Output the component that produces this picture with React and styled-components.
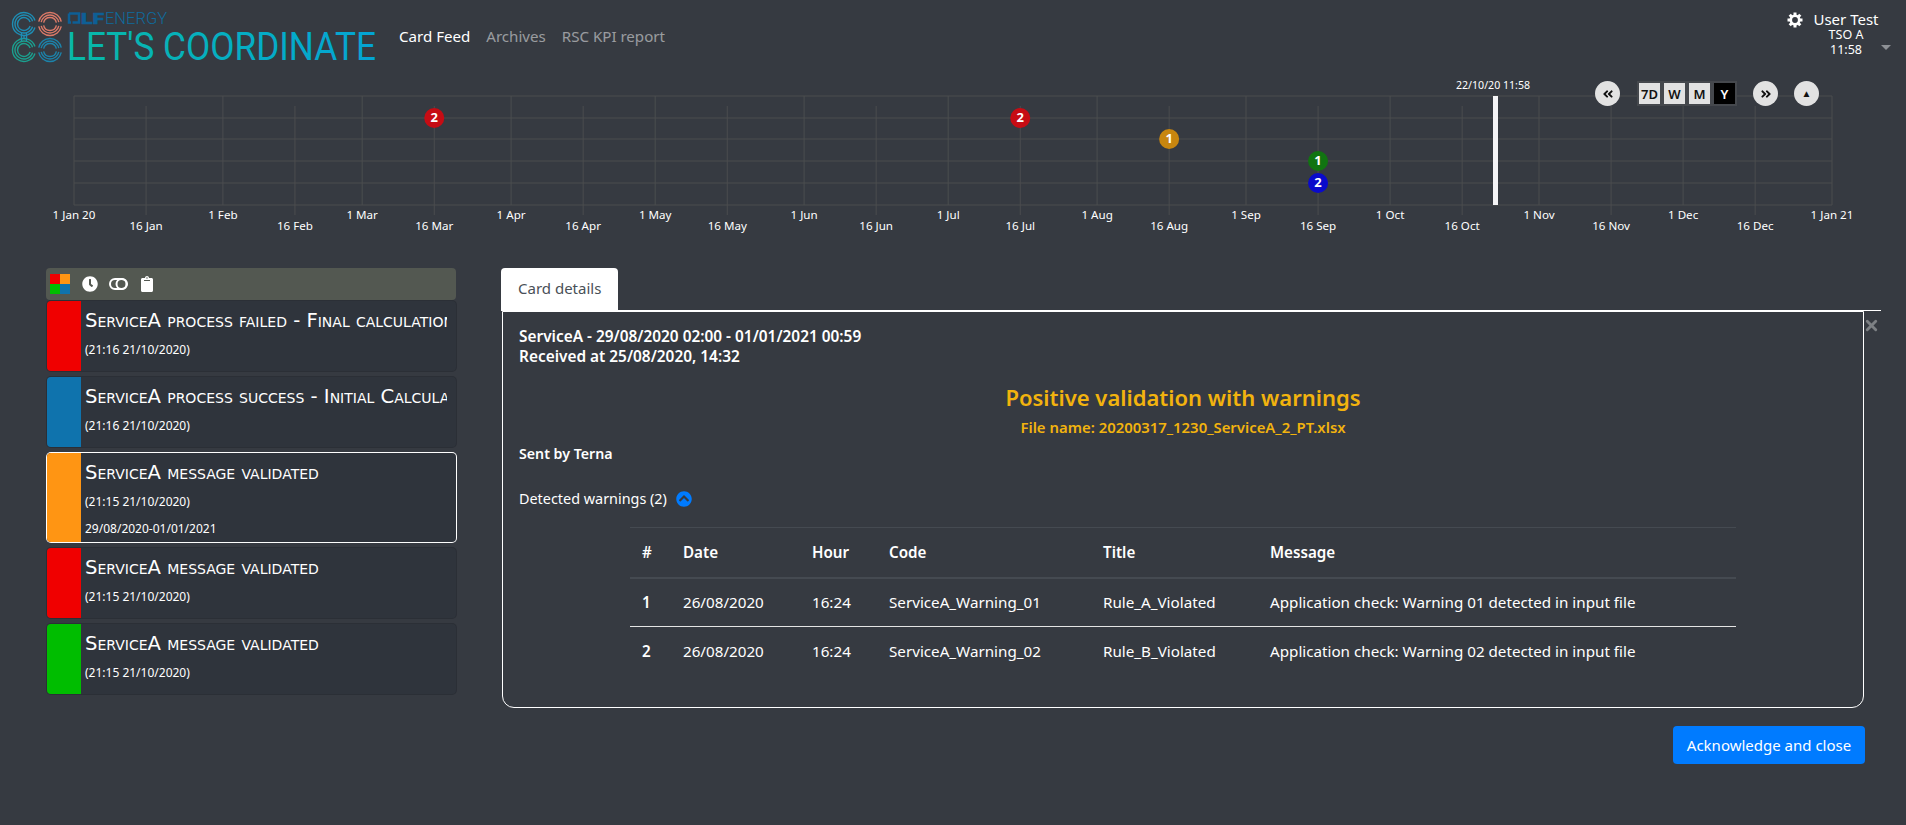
import React from 'react';
import styled, { createGlobalStyle } from 'styled-components';
import { FaClock, FaClipboard, FaChevronCircleUp, FaAngleDoubleLeft, FaAngleDoubleRight } from 'react-icons/fa';
import { X } from 'lucide-react';

const FONT = '"Noto Sans", "Open Sans", sans-serif';

const GlobalStyle = createGlobalStyle`
  html, body {
    margin: 0;
    padding: 0;
    background: #363a41;
    color: #fff;
    font-family: ${FONT};
  }
  * { box-sizing: border-box; }
`;

const Page = styled.div`
  width: 1906px;
  height: 825px;
  overflow: hidden;
`;

/* top bar */
const Header = styled.header`
  display: flex;
  align-items: flex-start;
  height: 76px;
`;

const Brand = styled.svg`
  display: block;
  width: 390px;
  height: 76px;
  flex: none;
`;

const Nav = styled.nav`
  display: flex;
  gap: 16px;
  margin-left: 9px;
  padding-top: 25px;
`;

const NavLink = styled.a`
  font-size: 15.1px;
  line-height: 22px;
  color: ${(p) => (p.$active ? '#fff' : 'rgba(255,255,255,0.5)')};
`;

const UserBox = styled.div`
  display: flex;
  margin-left: auto;
  padding: 10px 15px 0 0;
  gap: 10px;
`;

const GearIcon = styled.svg`
  display: block;
  width: 16px;
  height: 16px;
  margin-top: 2px;
`;

const UserText = styled.div`
  display: flex;
  flex-direction: column;
  align-items: center;
  width: 66px;
`;

const UserName = styled.span`
  font-size: 15px;
  line-height: 18px;
  white-space: nowrap;
`;

const UserSub = styled.span`
  font-size: 12.5px;
  line-height: 14.5px;
`;

const Caret = styled.span`
  width: 0;
  height: 0;
  margin: 35px 0 0 -8px;
  border-left: 5px solid transparent;
  border-right: 5px solid transparent;
  border-top: 5px solid #8d9095;
`;

/* timeline */
const Timeline = styled.section`
  position: relative;
  height: 160px;
`;

const Chart = styled.svg`
  display: block;
  width: 1906px;
  height: 160px;
`;

const Controls = styled.div`
  position: absolute;
  top: 5px;
  left: 1595px;
  display: flex;
  align-items: center;
`;

const RoundBtn = styled.button`
  display: flex;
  align-items: center;
  justify-content: center;
  width: 25px;
  height: 25px;
  padding: 0;
  margin-left: ${(p) => p.$before || 0}px;
  margin-right: ${(p) => p.$after || 0}px;
  border: 0;
  border-radius: 50%;
  background: #e2e2e2;
  color: #111;
  font-family: "Liberation Sans", sans-serif;
  font-size: 10px;
  line-height: 1;
`;

const RangeBtn = styled.button`
  width: 25px;
  height: 25px;
  padding: 0;
  border: 2px solid #45484d;
  background: ${(p) => (p.$active ? '#000' : '#e2e2e2')};
  color: ${(p) => (p.$active ? '#fff' : '#111')};
  font-family: ${FONT};
  font-weight: 600;
  font-size: 13px;
  line-height: 20px;
`;

/* main area */
const Main = styled.main`
  display: flex;
  align-items: flex-start;
  margin-top: 32px;
  padding-left: 46px;
  gap: 45px;
`;

const FeedColumn = styled.div`
  width: 410px;
  flex: none;
`;

const FilterBar = styled.div`
  display: flex;
  align-items: center;
  height: 32px;
  padding-left: 4px;
  border-radius: 4px;
  background: #535851;
  color: #fff;
`;

const FilterIcons = styled.div`
  display: flex;
  align-items: center;
  margin-left: 12px;
  gap: 11px;
  font-size: 16px;
  line-height: 0;
`;

const ColourSquare = styled.div`
  display: grid;
  grid-template-columns: 10px 10px;
  grid-auto-rows: 10px;
  width: 20px;
`;

const Swatch = styled.span`
  background: ${(p) => p.$color};
`;

const CardList = styled.div`
  display: flex;
  flex-direction: column;
  gap: 6px;
  margin-top: 1px;
`;

const Card = styled.article`
  display: flex;
  height: ${(p) => (p.$selected ? 89 : 70)}px;
  margin-left: 1px;
  overflow: hidden;
  border-radius: 4px;
  background: #2f343c;
  box-shadow: ${(p) => (p.$selected ? '0 0 0 1px #fff' : '0 0 0 1px #2b2f36')};
`;

const CardBar = styled.div`
  width: 34px;
  flex: none;
  background: ${(p) => p.$color};
`;

const CardBody = styled.div`
  flex: 1;
  min-width: 0;
  padding: 8px 9px 0 4px;
`;

const CardTitle = styled.div`
  overflow: hidden;
  white-space: nowrap;
  font-family: "DejaVu Sans", sans-serif;
  font-variant: small-caps;
  font-size: 19.6px;
  line-height: 24px;
`;

const CardLine = styled.div`
  margin-top: ${(p) => p.$top || 8}px;
  font-size: 12px;
  line-height: 18px;
`;

const DetailColumn = styled.div`
  position: relative;
  width: 1380px;
  flex: none;
`;

const TabRow = styled.div`
  height: 43px;
  border-bottom: 1px solid #fff;
`;

const Tab = styled.div`
  width: 117px;
  height: 42px;
  padding-left: 17px;
  border-radius: 4px 4px 0 0;
  background: #fff;
  color: #495057;
  font-size: 15px;
  line-height: 41px;
`;

const CloseBtn = styled.span`
  position: absolute;
  top: 49px;
  right: 1px;
  color: #7d8084;
  line-height: 0;
`;

const Panel = styled.div`
  width: 1362px;
  height: 397px;
  margin-left: 1px;
  padding: 15px 16px 0;
  border: 1px solid #fff;
  border-radius: 0 0 12px 12px;
`;

const Heading = styled.div`
  font-size: 15.4px;
  font-weight: 600;
  line-height: 19.5px;
`;

const ResultTitle = styled.div`
  margin-top: 16px;
  text-align: center;
  color: #f2b30e;
  font-size: 22px;
  font-weight: 600;
  line-height: 30px;
`;

const FileName = styled.div`
  margin-top: 6px;
  text-align: center;
  color: #f2b30e;
  font-size: 14.9px;
  font-weight: 600;
  line-height: 18px;
`;

const SentBy = styled.div`
  margin-top: 9px;
  font-size: 14.2px;
  font-weight: 600;
  line-height: 18px;
`;

const WarningsRow = styled.div`
  display: flex;
  align-items: center;
  gap: 9px;
  margin-top: 27px;
  font-size: 14.4px;
  line-height: 18px;
  svg { color: #007bff; font-size: 16px; }
`;

const WarningsTable = styled.table`
  width: 1106px;
  margin: 19px auto 0;
  table-layout: fixed;
  border-collapse: collapse;
  font-size: 15.2px;
`;

const HeadCell = styled.th`
  height: 50px;
  padding: 0 12px;
  border-top: 1px solid #454a51;
  border-bottom: 2px solid #454a51;
  text-align: left;
  font-weight: 600;
`;

const Row = styled.tr`
  & + & td, & + & th { border-top: 1px solid #e4e4e4; }
`;

const RowHead = styled.th`
  height: 49px;
  padding: 0 12px;
  text-align: left;
  font-weight: 600;
`;

const Cell = styled.td`
  height: 49px;
  padding: 0 12px;
`;

const Actions = styled.div`
  display: flex;
  justify-content: flex-end;
  margin-top: 18px;
  padding-right: 16px;
`;

const PrimaryButton = styled.button`
  width: 192px;
  height: 38px;
  padding: 0;
  border: 0;
  border-radius: 4px;
  background: #007bff;
  color: #fff;
  font-family: ${FONT};
  font-size: 15px;
`;

/* timeline data */
const X0 = 74;
const PX_PER_DAY = (1832 - 74) / 366;
const dayX = (month, day, year = 2020) =>
  X0 + ((Date.UTC(year, month, day) - Date.UTC(2020, 0, 1)) / 86400000) * PX_PER_DAY;

const MONTHS = ['Jan', 'Feb', 'Mar', 'Apr', 'May', 'Jun', 'Jul', 'Aug', 'Sep', 'Oct', 'Nov', 'Dec'];
const ROWS = [96, 118, 139, 161, 183, 205];
const MARKERS = [
  { m: 2, y: 118, n: 2, color: '#c60c14' },
  { m: 6, y: 118, n: 2, color: '#c60c14' },
  { m: 7, y: 139, n: 1, color: '#c8860f' },
  { m: 8, y: 161, n: 1, color: '#117411' },
  { m: 8, y: 183, n: 2, color: '#0a0acb' },
];

const arc = (cx, cy, r, from, to) => {
  const rad = (a) => (a * Math.PI) / 180;
  const large = Math.abs(to - from) > 180 ? 1 : 0;
  return `M${cx + r * Math.cos(rad(from))} ${cy + r * Math.sin(rad(from))}A${r} ${r} 0 ${large} 1 ${cx + r * Math.cos(rad(to))} ${cy + r * Math.sin(rad(to))}`;
};

// open on the right, joined to its neighbour by the bridge
const OPEN_RIGHT = [[18, 342]];
// split into a top and a bottom half
const SPLIT = [[192, 348], [12, 168]];

const Rings = ({ cx, cy, color, spans }) => (
  <g fill="none" stroke={color} strokeWidth="1.400">
    {[11.500, 9, 6.500].map((r) =>
      spans.map(([from, to]) => <path key={`${r}-${from}`} d={arc(cx, cy, r, from, to)} />),
    )}
  </g>
);

const Logo = () => (
  <Brand viewBox="0 0 390 76">
    <defs>
      <linearGradient id="titleFill" x1="0" x2="1" y1="0" y2="0">
        <stop offset="0" stopColor="#08b9a6" />
        <stop offset="0.55" stopColor="#05aec4" />
        <stop offset="1" stopColor="#04a4d4" />
      </linearGradient>
    </defs>
    <Rings cx={24} cy={24} color="#1e8db4" spans={OPEN_RIGHT} />
    <Rings cx={50} cy={24} color="#dc7a68" spans={SPLIT} />
    <Rings cx={24} cy={50} color="#1ba08f" spans={OPEN_RIGHT} />
    <Rings cx={50} cy={50} color="#1c83aa" spans={SPLIT} />
    <path d="M21.500 33v8M24 35v4M26.500 33v8" stroke="#1e8db4" strokeWidth="1.400" fill="none" />
    <path d="M69 13.500h10v9h-6.500M69 13.500v9h2" fill="none" stroke="#0e5f95" strokeWidth="2.500" />
    <text x="81" y="24" fontFamily="Roboto, sans-serif" fontWeight="900" fontSize="15" fill="#0e5f95" stroke="#0e5f95" strokeWidth="0.500" textLength="23" lengthAdjust="spacingAndGlyphs">LF</text>
    <text x="105" y="24" fontFamily="Roboto, sans-serif" fontWeight="300" fontSize="16" fill="#0f6a9c" textLength="62" lengthAdjust="spacingAndGlyphs">ENERGY</text>
    <text x="67" y="60" fontFamily="Roboto, sans-serif" fontSize="39" fill="url(#titleFill)" textLength="309" lengthAdjust="spacingAndGlyphs">LET'S COORDINATE</text>
  </Brand>
);

const Gear = () => (
  <GearIcon viewBox="0 0 16 16">
    <g fill="#fff">
      {[0, 45, 90, 135, 180, 225, 270, 315].map((a) => (
        <rect key={a} x="6.500" y="0.500" width="3" height="4" transform={`rotate(${a} 8 8)`} />
      ))}
    </g>
    <circle cx="8" cy="8" r="4.200" fill="none" stroke="#fff" strokeWidth="2.600" />
  </GearIcon>
);

const TimelineChart = () => {
  const ticks = [];
  for (let m = 0; m < 12; m += 1) {
    ticks.push({ x: dayX(m, 1), top: 96, label: `1 ${MONTHS[m]}${m === 0 ? ' 20' : ''}`, labelY: 219 });
    ticks.push({ x: dayX(m, 16), top: 106, label: `16 ${MONTHS[m]}`, labelY: 230 });
  }
  ticks.push({ x: dayX(0, 1, 2021), top: 96, label: '1 Jan 21', labelY: 219 });

  return (
    <Chart viewBox="0 76 1906 160">
      <g stroke="#4b4d4f" strokeWidth="1">
        {ROWS.map((y) => (
          <line key={y} x1={X0} x2={1832} y1={y} y2={y} />
        ))}
        {ticks.map((t) => (
          <line key={t.label} x1={t.x} x2={t.x} y1={t.top} y2={t.labelY === 230 ? 215 : 205} />
        ))}
      </g>
      <g fill="#fff" fontFamily={FONT} fontSize="11.600" textAnchor="middle">
        {ticks.map((t) => (
          <text key={t.label} x={t.x} y={t.labelY}>{t.label}</text>
        ))}
        <text x={1493} y={89} fontSize="10.600">22/10/20 11:58</text>
      </g>
      <rect x={1493} y={96} width={5} height={109} fill="#f4f4f6" />
      {MARKERS.map((d) => (
        <g key={`${d.m}-${d.y}`}>
          <circle cx={dayX(d.m, 16)} cy={d.y} r={10} fill={d.color} />
          <text x={dayX(d.m, 16)} y={d.y + 4} fill="#fff" fontFamily={FONT} fontWeight="700" fontSize="13" textAnchor="middle">{d.n}</text>
        </g>
      ))}
    </Chart>
  );
};

const RingsIcon = () => (
  <svg width="19" height="14" viewBox="0 0 19 14" fill="none" stroke="#fff" strokeWidth="2">
    <rect x="1" y="2" width="17" height="10" rx="5" />
    <circle cx="12.500" cy="7" r="5" />
  </svg>
);

const CARDS = [
  { color: '#f00000', title: 'ServiceA process failed - Final calculation for the day', time: '(21:16 21/10/2020)' },
  { color: '#0f73ad', title: 'ServiceA process success - Initial Calculation for the day', time: '(21:16 21/10/2020)' },
  { color: '#ff9513', title: 'ServiceA message validated', time: '(21:15 21/10/2020)', range: '29/08/2020-01/01/2021', selected: true },
  { color: '#f00000', title: 'ServiceA message validated', time: '(21:15 21/10/2020)' },
  { color: '#00bd00', title: 'ServiceA message validated', time: '(21:15 21/10/2020)' },
];

const WARNINGS = [
  { n: 1, code: 'ServiceA_Warning_01', title: 'Rule_A_Violated', msg: 'Application check: Warning 01 detected in input file' },
  { n: 2, code: 'ServiceA_Warning_02', title: 'Rule_B_Violated', msg: 'Application check: Warning 02 detected in input file' },
];

const COLUMNS = [
  ['#', 41],
  ['Date', 129],
  ['Hour', 77],
  ['Code', 214],
  ['Title', 167],
  ['Message', 478],
];

const App = () => (
  <Page>
    <GlobalStyle />
    <Header>
      <Logo />
      <Nav>
        <NavLink $active>Card Feed</NavLink>
        <NavLink>Archives</NavLink>
        <NavLink>RSC KPI report</NavLink>
      </Nav>
      <UserBox>
        <Gear />
        <UserText>
          <UserName>User Test</UserName>
          <UserSub>TSO A</UserSub>
          <UserSub>11:58</UserSub>
        </UserText>
        <Caret />
      </UserBox>
    </Header>

    <Timeline>
      <TimelineChart />
      <Controls>
        <RoundBtn $after={17}><FaAngleDoubleLeft size={12} /></RoundBtn>
        <RangeBtn>7D</RangeBtn>
        <RangeBtn>W</RangeBtn>
        <RangeBtn>M</RangeBtn>
        <RangeBtn $active>Y</RangeBtn>
        <RoundBtn $before={16} $after={16}><FaAngleDoubleRight size={12} /></RoundBtn>
        <RoundBtn>▲</RoundBtn>
      </Controls>
    </Timeline>

    <Main>
      <FeedColumn>
        <FilterBar>
          <ColourSquare>
            <Swatch $color="#f00000" />
            <Swatch $color="#ff9513" />
            <Swatch $color="#00bd00" />
            <Swatch $color="#0f73ad" />
          </ColourSquare>
          <FilterIcons>
            <FaClock />
            <RingsIcon />
            <FaClipboard />
          </FilterIcons>
        </FilterBar>
        <CardList>
          {CARDS.map((c, i) => (
            <Card key={i} $selected={c.selected}>
              <CardBar $color={c.color} />
              <CardBody>
                <CardTitle>{c.title}</CardTitle>
                <CardLine>{c.time}</CardLine>
                {c.range && <CardLine $top={9}>{c.range}</CardLine>}
              </CardBody>
            </Card>
          ))}
        </CardList>
      </FeedColumn>

      <DetailColumn>
        <TabRow>
          <Tab>Card details</Tab>
        </TabRow>
        <CloseBtn><X size={17} strokeWidth={4} /></CloseBtn>
        <Panel>
          <Heading>ServiceA - 29/08/2020 02:00 - 01/01/2021 00:59</Heading>
          <Heading>Received at 25/08/2020, 14:32</Heading>
          <ResultTitle>Positive validation with warnings</ResultTitle>
          <FileName>File name: 20200317_1230_ServiceA_2_PT.xlsx</FileName>
          <SentBy>Sent by Terna</SentBy>
          <WarningsRow>
            Detected warnings (2) <FaChevronCircleUp />
          </WarningsRow>
          <WarningsTable>
            <colgroup>
              {COLUMNS.map(([name, w]) => (
                <col key={name} width={w} />
              ))}
            </colgroup>
            <thead>
              <tr>
                {COLUMNS.map(([name]) => (
                  <HeadCell key={name}>{name}</HeadCell>
                ))}
              </tr>
            </thead>
            <tbody>
              {WARNINGS.map((w) => (
                <Row key={w.n}>
                  <RowHead>{w.n}</RowHead>
                  <Cell>26/08/2020</Cell>
                  <Cell>16:24</Cell>
                  <Cell>{w.code}</Cell>
                  <Cell>{w.title}</Cell>
                  <Cell>{w.msg}</Cell>
                </Row>
              ))}
            </tbody>
          </WarningsTable>
        </Panel>
        <Actions>
          <PrimaryButton>Acknowledge and close</PrimaryButton>
        </Actions>
      </DetailColumn>
    </Main>
  </Page>
);

export default App;
